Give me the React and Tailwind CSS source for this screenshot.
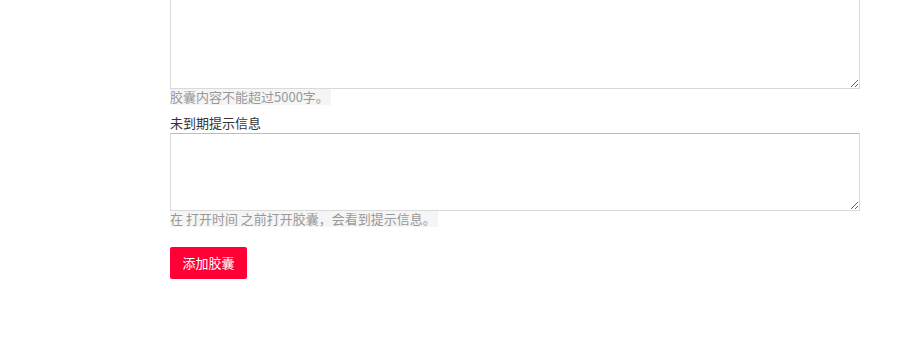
export default function App() {
  return (
    <div className="w-[898px] h-[338px] overflow-hidden bg-white" style={{ fontFamily: '"Microsoft YaHei", "Noto Sans CJK SC", "Noto Sans", sans-serif' }}>
      <div className="ml-[170px] w-[690px] flex flex-col items-start">
        <textarea className="block w-[690px] h-[120px] mt-[-31px] border border-[#d9d9d9] border-t-[#bdbdbd] bg-white outline-none" />
        <span className="block h-[16px] leading-[16px] text-[13px] text-[#999] bg-[#f5f5f5] pr-[2px]">胶囊内容不能超过5000字。</span>
        <label className="block mt-[8px] h-[20px] leading-[20px] text-[13px] text-[#333]">未到期提示信息</label>
        <textarea className="block w-[690px] h-[78px] border border-[#d9d9d9] border-t-[#bdbdbd] bg-white outline-none" />
        <span className="block h-[16px] leading-[16px] text-[13px] text-[#999] bg-[#f5f5f5] pr-[2px]">在 打开时间 之前打开胶囊，会看到提示信息。</span>
        <button className="mt-[20px] h-[32px] w-[77px] rounded-[2px] bg-[#ff0036] text-white text-[13px]">添加胶囊</button>
      </div>
    </div>
  );
}
